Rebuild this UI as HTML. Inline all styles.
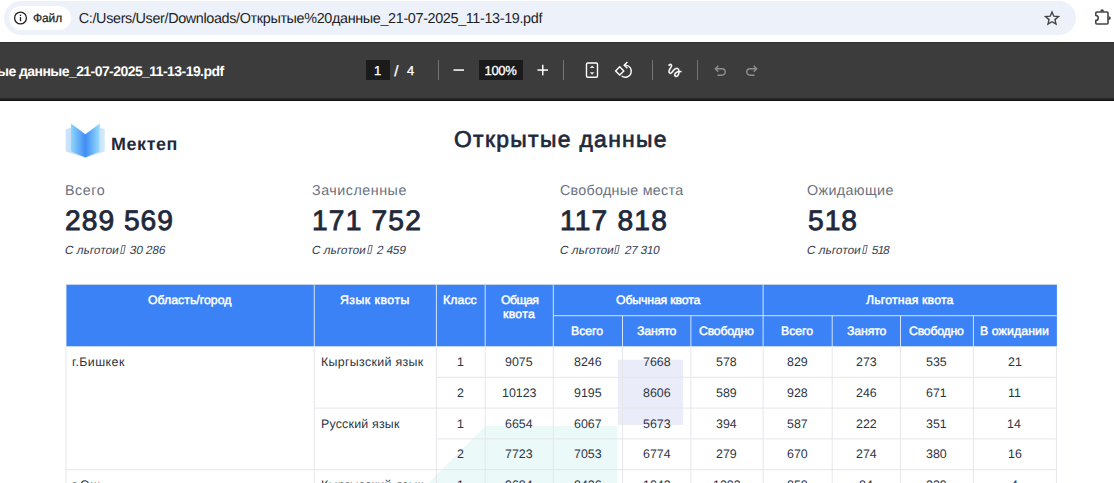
<!DOCTYPE html>
<html lang="ru">
<head>
<meta charset="utf-8">
<title>Открытые данные</title>
<style>
html,body{margin:0;padding:0;}
body{width:1114px;height:483px;overflow:hidden;background:#fff;font-family:"Liberation Sans",sans-serif;position:relative;text-rendering:geometricPrecision;}
.a{position:absolute;}
.t{position:absolute;white-space:nowrap;}
</style>
</head>
<body>
<!-- browser address bar -->
<div class="a" style="left:4px;top:1px;width:1072px;height:34px;border-radius:17px;background:#edf1fa"></div>
<div class="a" style="left:9px;top:6px;width:62px;height:24px;border-radius:12px;background:#fff"></div>
<!-- pdf toolbar -->
<div class="a" style="left:0;top:42px;width:1114px;height:56px;background:#3c3c3c"></div>
<div class="a" style="left:0;top:42px;width:1114px;height:1px;background:#303030"></div>
<div class="a" style="left:0;top:98px;width:1114px;height:2px;background:#242424"></div>
<div class="a" style="left:0;top:100px;width:1114px;height:1px;background:#111"></div>
<div class="a" style="left:366px;top:60px;width:24px;height:20px;background:#1b1b1b"></div>
<div class="a" style="left:479px;top:60px;width:44px;height:20px;background:#1b1b1b"></div>
<svg class="a" style="left:0;top:0" width="1114" height="101" viewBox="0 0 1114 101" fill="none">
<!-- info icon -->
<circle cx="20.5" cy="18" r="5.9" stroke="#1f1f1f" stroke-width="1.3"/>
<rect x="19.85" y="17" width="1.3" height="4.2" fill="#1f1f1f"/>
<rect x="19.85" y="14.6" width="1.3" height="1.4" fill="#1f1f1f"/>
<!-- star -->
<path d="M1052.00 11.93 L1053.81 16.21 L1058.46 16.59 L1054.94 19.62 L1055.99 24.09 L1052.00 21.71 L1048.01 24.09 L1049.06 19.62 L1045.54 16.59 L1050.19 16.21 Z" stroke="#444" stroke-width="1.4" stroke-linejoin="miter"/>
<!-- extension puzzle -->
<path d="M1096.8 12 H1107 a1 1 0 0 1 1 1 V23 a1 1 0 0 1 -1 1 H1096.8 a1 1 0 0 1 -1 -1 V20.3 a2.4 2.4 0 0 0 0 -4.8 V13 a1 1 0 0 1 1 -1 Z" stroke="#444" stroke-width="1.6" stroke-linejoin="round"/>
<path d="M1100.2 11.5 a1.9 2.2 0 0 1 3.8 0 Z" fill="#444"/>
<path d="M1108.5 16.2 a2.3 1.9 0 0 1 0 3.8 Z" fill="#444"/>
<!-- separators -->
<rect x="438" y="60" width="1" height="20" fill="#757575"/>
<rect x="563" y="60" width="1" height="20" fill="#757575"/>
<rect x="652" y="60" width="1" height="20" fill="#757575"/>
<rect x="697" y="60" width="1" height="20" fill="#757575"/>
<!-- minus / plus -->
<rect x="453.5" y="69.3" width="10.5" height="1.5" fill="#fff"/>
<rect x="537.5" y="69.3" width="10.5" height="1.5" fill="#fff"/>
<rect x="542" y="64.8" width="1.5" height="10.5" fill="#fff"/>
<!-- fit to page -->
<rect x="586.5" y="63" width="11" height="14.2" rx="1.3" stroke="#fff" stroke-width="1.4"/>
<path d="M589.7 67.9 L592.1 65.4 L594.5 67.9 Z M589.7 72.2 L592.1 74.7 L594.5 72.2 Z" fill="#e8e8e8"/>
<!-- rotate -->
<path d="M619.7 66.8 L623.8 70.9 L619.7 75 L615.6 70.9 Z" stroke="#fff" stroke-width="1.4" stroke-linejoin="miter"/>
<path d="M624.3 65.15 H625.3 A6.05 6.05 0 1 1 621.6 76" stroke="#fff" stroke-width="1.4"/>
<path d="M627.4 62 L624.2 65.15 L627.4 68.3" stroke="#fff" stroke-width="1.4"/>
<!-- draw -->
<g transform="translate(665.6 61.1) scale(0.77)"><path fill="#fff" stroke="#3c3c3c" stroke-width="0.5" d="M4.59 6.89c.7-.71 1.4-1.35 1.71-1.22.5.2 0 1.03-.3 1.52-.25.42-2.86 3.89-2.86 6.31 0 1.28.48 2.34 1.34 2.98.75.56 1.74.73 2.64.46 1.07-.31 1.95-1.4 3.06-2.77 1.21-1.49 2.83-3.44 4.08-3.44 1.63 0 1.65 1.01 1.76 1.79-3.78.64-5.38 3.67-5.38 5.37 0 1.7 1.44 3.09 3.21 3.09 1.63 0 4.29-1.33 4.69-6.1H21v-2.5h-2.47c-.15-1.65-1.09-4.2-4.03-4.2-2.25 0-4.18 1.91-4.94 2.84-.58.73-2.06 2.48-2.29 2.72-.25.3-.68.84-1.11.84-.45 0-.72-.83-.36-1.92.35-1.09 1.4-2.86 1.85-3.52.78-1.14 1.3-1.92 1.3-3.28C8.95 3.69 7.31 3 6.44 3 5.12 3 3.97 4 3.72 4.25c-.36.36-.66.66-.88.93l1.75 1.71zm9.29 11.66c-.31 0-.74-.26-.74-.72 0-.6.73-2.2 2.87-2.76-.3 2.69-1.43 3.48-2.13 3.48z"/></g>
<!-- undo / redo -->
<path d="M718.3 65.8 L715.3 68.8 L718.3 71.8 M715.6 68.8 H722 A3.2 3.2 0 0 1 722 75.2 H717.5" stroke="#8f8f8f" stroke-width="1.4"/>
<path d="M753.7 65.8 L756.7 68.8 L753.7 71.8 M756.4 68.8 H750 A3.2 3.2 0 0 0 750 75.2 H754.5" stroke="#8f8f8f" stroke-width="1.4"/>
</svg>
<!-- logo -->
<svg class="a" style="left:64px;top:120px" width="44" height="40" viewBox="64 120 44 40">
<defs>
<linearGradient id="g1" x1="0" y1="0" x2="1" y2="0"><stop offset="0" stop-color="#8fd6fb"/><stop offset="0.5" stop-color="#3f8df6"/><stop offset="1" stop-color="#9addfc"/></linearGradient>
<linearGradient id="g2" x1="0" y1="0" x2="1" y2="0"><stop offset="0" stop-color="#cfe6fb"/><stop offset="0.5" stop-color="#a9c8f5"/><stop offset="1" stop-color="#d3ecfc"/></linearGradient>
</defs>
<polygon points="65.7,129 71,128 71,151.4 85.3,157.5 99.8,151.4 99.8,128 104.8,129 104.8,151.4 85.3,157.5 65.7,151.4" fill="url(#g2)"/>
<polygon points="71,123.4 85.3,134.2 99.8,123.4 99.8,151.4 85.3,157.5 71,151.4" fill="url(#g1)"/>
</svg>

<!-- page -->
<svg class="a" style="left:0;top:0" width="1114" height="483" viewBox="0 0 1114 483" shape-rendering="auto">
<polygon points="485.5,426 617.5,426 617.5,483 428.5,483" fill="#ebf9f9"/>
<rect x="617.9" y="359.8" width="65.2" height="65.1" fill="#ebecf9"/>
<rect x="65.5" y="284" width="991.4" height="1" fill="#e5e7eb"/>
<rect x="66.4" y="284.8" width="990.5" height="61.5" fill="#3b82f6"/>
<rect x="313.80" y="285" width="1" height="61.30" fill="rgba(255,255,255,0.78)"/>
<rect x="435.90" y="285" width="1" height="61.30" fill="rgba(255,255,255,0.78)"/>
<rect x="484.70" y="285" width="1" height="61.30" fill="rgba(255,255,255,0.78)"/>
<rect x="552.80" y="285" width="1" height="61.30" fill="rgba(255,255,255,0.78)"/>
<rect x="622.00" y="315.7" width="1" height="30.60" fill="rgba(255,255,255,0.78)"/>
<rect x="690.40" y="315.7" width="1" height="30.60" fill="rgba(255,255,255,0.78)"/>
<rect x="762.60" y="285" width="1" height="61.30" fill="rgba(255,255,255,0.78)"/>
<rect x="831.70" y="315.7" width="1" height="30.60" fill="rgba(255,255,255,0.78)"/>
<rect x="900.00" y="315.7" width="1" height="30.60" fill="rgba(255,255,255,0.78)"/>
<rect x="972.90" y="315.7" width="1" height="30.60" fill="rgba(255,255,255,0.78)"/>
<rect x="553.3" y="315.20" width="503.60" height="1" fill="rgba(255,255,255,0.78)"/>
<rect x="65.50" y="346.3" width="1" height="136.70" fill="#e5e7eb"/>
<rect x="313.80" y="346.3" width="1" height="136.70" fill="#e5e7eb"/>
<rect x="435.90" y="346.3" width="1" height="136.70" fill="#e5e7eb"/>
<rect x="484.70" y="346.3" width="1" height="136.70" fill="#e5e7eb"/>
<rect x="552.80" y="346.3" width="1" height="136.70" fill="#e5e7eb"/>
<rect x="622.00" y="346.3" width="1" height="136.70" fill="#e5e7eb"/>
<rect x="690.40" y="346.3" width="1" height="136.70" fill="#e5e7eb"/>
<rect x="762.60" y="346.3" width="1" height="136.70" fill="#e5e7eb"/>
<rect x="831.70" y="346.3" width="1" height="136.70" fill="#e5e7eb"/>
<rect x="900.00" y="346.3" width="1" height="136.70" fill="#e5e7eb"/>
<rect x="972.90" y="346.3" width="1" height="136.70" fill="#e5e7eb"/>
<rect x="1055.90" y="346.3" width="1" height="136.70" fill="#e5e7eb"/>
<rect x="436.4" y="376.80" width="620.50" height="1" fill="#e5e7eb"/>
<rect x="314.3" y="407.60" width="742.60" height="1" fill="#e5e7eb"/>
<rect x="436.4" y="438.40" width="620.50" height="1" fill="#e5e7eb"/>
<rect x="65.5" y="469.20" width="991.40" height="1" fill="#e5e7eb"/>
</svg>
<div class="t" style="left:32.90px;top:12.30px;line-height:12px;font-size:12px;color:#1f1f1f;letter-spacing:-0.067px;-webkit-text-stroke:0.25px #1f1f1f;">Файл</div>
<div class="t" style="left:78.80px;top:12.00px;line-height:14.4px;font-size:14.4px;color:#1f1f1f;letter-spacing:-0.358px;">C:/Users/User/Downloads/Открытые%20данные_21-07-2025_11-13-19.pdf</div>
<div class="t" style="left:-3.00px;top:63.80px;line-height:14px;font-size:14px;color:#ffffff;font-weight:700;letter-spacing:-0.562px;">ые данные_21-07-2025_11-13-19.pdf</div>
<div class="t" style="left:374.00px;top:64.00px;line-height:13px;font-size:13px;color:#ffffff;-webkit-text-stroke:0.3px #ffffff;">1</div>
<div class="t" style="left:394.30px;top:63.60px;line-height:15px;font-size:15px;color:#ffffff;-webkit-text-stroke:0.3px #ffffff;">/</div>
<div class="t" style="left:407.00px;top:64.00px;line-height:13px;font-size:13px;color:#ffffff;-webkit-text-stroke:0.3px #ffffff;">4</div>
<div class="t" style="left:484.50px;top:64.00px;line-height:13px;font-size:13px;color:#ffffff;letter-spacing:-0.333px;-webkit-text-stroke:0.3px #ffffff;">100%</div>
<div class="t" style="left:110.50px;top:135.70px;line-height:17.9px;font-size:17.9px;color:#1e293b;font-weight:700;transform:skewX(-0.02deg);letter-spacing:0.620px;">Мектеп</div>
<div class="t" style="left:454.40px;top:128.20px;line-height:22.9px;font-size:22.9px;color:#1e293b;transform:skewX(-0.02deg);letter-spacing:1.321px;-webkit-text-stroke:0.7px #1e293b;">Открытые данные</div>
<div class="t" style="left:65.30px;top:183.80px;line-height:14.3px;font-size:14.3px;color:#6b7280;transform:skewX(-0.02deg);letter-spacing:0.525px;">Всего</div>
<div class="t" style="left:312.10px;top:183.80px;line-height:14.3px;font-size:14.3px;color:#6b7280;transform:skewX(-0.02deg);letter-spacing:0.520px;">Зачисленные</div>
<div class="t" style="left:559.60px;top:183.80px;line-height:14.3px;font-size:14.3px;color:#6b7280;transform:skewX(-0.02deg);letter-spacing:0.279px;">Свободные места</div>
<div class="t" style="left:807.10px;top:183.80px;line-height:14.3px;font-size:14.3px;color:#6b7280;transform:skewX(-0.02deg);letter-spacing:0.375px;">Ожидающие</div>
<div class="t" style="left:65.30px;top:206.40px;line-height:28.2px;font-size:28.2px;color:#1e293b;transform:skewX(-0.02deg);letter-spacing:1.017px;-webkit-text-stroke:0.85px #1e293b;">289 569</div>
<div class="t" style="left:311.50px;top:206.40px;line-height:28.2px;font-size:28.2px;color:#1e293b;transform:skewX(-0.02deg);letter-spacing:1.167px;-webkit-text-stroke:0.85px #1e293b;">171 752</div>
<div class="t" style="left:559.60px;top:206.40px;line-height:28.2px;font-size:28.2px;color:#1e293b;transform:skewX(-0.02deg);letter-spacing:1.183px;-webkit-text-stroke:0.85px #1e293b;">117 818</div>
<div class="t" style="left:807.50px;top:206.40px;line-height:28.2px;font-size:28.2px;color:#1e293b;transform:skewX(-0.02deg);letter-spacing:1.000px;-webkit-text-stroke:0.85px #1e293b;">518</div>
<div class="t" style="left:64.00px;top:244.70px;line-height:11.8px;font-size:11.8px;color:#374151;transform:skewX(-11deg);transform-origin:0 85%;letter-spacing:0.050px;">С льготои</div>
<div class="t" style="left:129.40px;top:244.70px;line-height:11.8px;font-size:11.8px;color:#374151;transform:skewX(-11deg);transform-origin:0 85%;letter-spacing:-0.080px;">30 286</div>
<div class="t" style="left:311.00px;top:244.70px;line-height:11.8px;font-size:11.8px;color:#374151;transform:skewX(-11deg);transform-origin:0 85%;letter-spacing:0.050px;">С льготои</div>
<div class="t" style="left:376.40px;top:244.70px;line-height:11.8px;font-size:11.8px;color:#374151;transform:skewX(-11deg);transform-origin:0 85%;letter-spacing:-0.075px;">2 459</div>
<div class="t" style="left:558.60px;top:244.70px;line-height:11.8px;font-size:11.8px;color:#374151;transform:skewX(-11deg);transform-origin:0 85%;letter-spacing:0.050px;">С льготои</div>
<div class="t" style="left:624.00px;top:244.70px;line-height:11.8px;font-size:11.8px;color:#374151;transform:skewX(-11deg);transform-origin:0 85%;letter-spacing:-0.240px;">27 310</div>
<div class="t" style="left:806.00px;top:244.70px;line-height:11.8px;font-size:11.8px;color:#374151;transform:skewX(-11deg);transform-origin:0 85%;letter-spacing:0.050px;">С льготои</div>
<div class="t" style="left:871.40px;top:244.70px;line-height:11.8px;font-size:11.8px;color:#374151;transform:skewX(-11deg);transform-origin:0 85%;letter-spacing:-0.850px;">518</div>
<div class="t" style="left:148.15px;top:294.30px;line-height:12.3px;font-size:12.3px;color:#ffffff;transform:skewX(-0.02deg);letter-spacing:0.008px;-webkit-text-stroke:0.45px #ffffff;">Область/город</div>
<div class="t" style="left:340.35px;top:294.30px;line-height:12.3px;font-size:12.3px;color:#ffffff;transform:skewX(-0.02deg);letter-spacing:0.489px;-webkit-text-stroke:0.45px #ffffff;">Язык квоты</div>
<div class="t" style="left:443.30px;top:294.30px;line-height:12.3px;font-size:12.3px;color:#ffffff;transform:skewX(-0.02deg);letter-spacing:0.075px;-webkit-text-stroke:0.45px #ffffff;">Класс</div>
<div class="t" style="left:500.75px;top:294.30px;line-height:12.3px;font-size:12.3px;color:#ffffff;transform:skewX(-0.02deg);letter-spacing:-0.550px;-webkit-text-stroke:0.45px #ffffff;">Общая</div>
<div class="t" style="left:502.75px;top:308.30px;line-height:12.3px;font-size:12.3px;color:#ffffff;transform:skewX(-0.02deg);letter-spacing:0.300px;-webkit-text-stroke:0.45px #ffffff;">квота</div>
<div class="t" style="left:615.70px;top:294.30px;line-height:12.3px;font-size:12.3px;color:#ffffff;transform:skewX(-0.02deg);letter-spacing:-0.150px;-webkit-text-stroke:0.45px #ffffff;">Обычная квота</div>
<div class="t" style="left:865.80px;top:294.30px;line-height:12.3px;font-size:12.3px;color:#ffffff;transform:skewX(-0.02deg);letter-spacing:0.162px;-webkit-text-stroke:0.45px #ffffff;">Льготная квота</div>
<div class="t" style="left:571.35px;top:325.30px;line-height:12.3px;font-size:12.3px;color:#ffffff;transform:skewX(-0.02deg);letter-spacing:-0.050px;-webkit-text-stroke:0.45px #ffffff;">Всего</div>
<div class="t" style="left:637.10px;top:325.30px;line-height:12.3px;font-size:12.3px;color:#ffffff;transform:skewX(-0.02deg);letter-spacing:-0.140px;-webkit-text-stroke:0.45px #ffffff;">Занято</div>
<div class="t" style="left:699.45px;top:325.30px;line-height:12.3px;font-size:12.3px;color:#ffffff;transform:skewX(-0.02deg);letter-spacing:-0.229px;-webkit-text-stroke:0.45px #ffffff;">Свободно</div>
<div class="t" style="left:781.15px;top:325.30px;line-height:12.3px;font-size:12.3px;color:#ffffff;transform:skewX(-0.02deg);letter-spacing:-0.050px;-webkit-text-stroke:0.45px #ffffff;">Всего</div>
<div class="t" style="left:846.85px;top:325.30px;line-height:12.3px;font-size:12.3px;color:#ffffff;transform:skewX(-0.02deg);letter-spacing:-0.140px;-webkit-text-stroke:0.45px #ffffff;">Занято</div>
<div class="t" style="left:909.45px;top:325.30px;line-height:12.3px;font-size:12.3px;color:#ffffff;transform:skewX(-0.02deg);letter-spacing:-0.229px;-webkit-text-stroke:0.45px #ffffff;">Свободно</div>
<div class="t" style="left:980.45px;top:325.30px;line-height:12.3px;font-size:12.3px;color:#ffffff;transform:skewX(-0.02deg);letter-spacing:0.100px;-webkit-text-stroke:0.45px #ffffff;">В ожидании</div>
<div class="t" style="left:457.30px;top:356.00px;line-height:12.4px;font-size:12.4px;color:#2b3545;transform:skewX(-0.02deg);">1</div>
<div class="t" style="left:505.25px;top:356.00px;line-height:12.4px;font-size:12.4px;color:#2b3545;transform:skewX(-0.02deg);">9075</div>
<div class="t" style="left:573.85px;top:356.00px;line-height:12.4px;font-size:12.4px;color:#2b3545;transform:skewX(-0.02deg);">8246</div>
<div class="t" style="left:642.60px;top:356.00px;line-height:12.4px;font-size:12.4px;color:#2b3545;transform:skewX(-0.02deg);">7668</div>
<div class="t" style="left:716.45px;top:356.00px;line-height:12.4px;font-size:12.4px;color:#2b3545;transform:skewX(-0.02deg);">578</div>
<div class="t" style="left:787.15px;top:356.00px;line-height:12.4px;font-size:12.4px;color:#2b3545;transform:skewX(-0.02deg);">829</div>
<div class="t" style="left:855.85px;top:356.00px;line-height:12.4px;font-size:12.4px;color:#2b3545;transform:skewX(-0.02deg);">273</div>
<div class="t" style="left:926.45px;top:356.00px;line-height:12.4px;font-size:12.4px;color:#2b3545;transform:skewX(-0.02deg);">535</div>
<div class="t" style="left:1007.95px;top:356.00px;line-height:12.4px;font-size:12.4px;color:#2b3545;transform:skewX(-0.02deg);">21</div>
<div class="t" style="left:457.30px;top:387.20px;line-height:12.4px;font-size:12.4px;color:#2b3545;transform:skewX(-0.02deg);">2</div>
<div class="t" style="left:501.75px;top:387.20px;line-height:12.4px;font-size:12.4px;color:#2b3545;transform:skewX(-0.02deg);">10123</div>
<div class="t" style="left:573.85px;top:387.20px;line-height:12.4px;font-size:12.4px;color:#2b3545;transform:skewX(-0.02deg);">9195</div>
<div class="t" style="left:642.60px;top:387.20px;line-height:12.4px;font-size:12.4px;color:#2b3545;transform:skewX(-0.02deg);">8606</div>
<div class="t" style="left:716.45px;top:387.20px;line-height:12.4px;font-size:12.4px;color:#2b3545;transform:skewX(-0.02deg);">589</div>
<div class="t" style="left:787.15px;top:387.20px;line-height:12.4px;font-size:12.4px;color:#2b3545;transform:skewX(-0.02deg);">928</div>
<div class="t" style="left:855.85px;top:387.20px;line-height:12.4px;font-size:12.4px;color:#2b3545;transform:skewX(-0.02deg);">246</div>
<div class="t" style="left:926.45px;top:387.20px;line-height:12.4px;font-size:12.4px;color:#2b3545;transform:skewX(-0.02deg);">671</div>
<div class="t" style="left:1008.45px;top:387.20px;line-height:12.4px;font-size:12.4px;color:#2b3545;transform:skewX(-0.02deg);">11</div>
<div class="t" style="left:457.30px;top:418.20px;line-height:12.4px;font-size:12.4px;color:#2b3545;transform:skewX(-0.02deg);">1</div>
<div class="t" style="left:505.25px;top:418.20px;line-height:12.4px;font-size:12.4px;color:#2b3545;transform:skewX(-0.02deg);">6654</div>
<div class="t" style="left:573.85px;top:418.20px;line-height:12.4px;font-size:12.4px;color:#2b3545;transform:skewX(-0.02deg);">6067</div>
<div class="t" style="left:642.60px;top:418.20px;line-height:12.4px;font-size:12.4px;color:#2b3545;transform:skewX(-0.02deg);">5673</div>
<div class="t" style="left:716.45px;top:418.20px;line-height:12.4px;font-size:12.4px;color:#2b3545;transform:skewX(-0.02deg);">394</div>
<div class="t" style="left:787.15px;top:418.20px;line-height:12.4px;font-size:12.4px;color:#2b3545;transform:skewX(-0.02deg);">587</div>
<div class="t" style="left:855.85px;top:418.20px;line-height:12.4px;font-size:12.4px;color:#2b3545;transform:skewX(-0.02deg);">222</div>
<div class="t" style="left:926.45px;top:418.20px;line-height:12.4px;font-size:12.4px;color:#2b3545;transform:skewX(-0.02deg);">351</div>
<div class="t" style="left:1007.45px;top:418.20px;line-height:12.4px;font-size:12.4px;color:#2b3545;transform:skewX(-0.02deg);">14</div>
<div class="t" style="left:457.30px;top:447.80px;line-height:12.4px;font-size:12.4px;color:#2b3545;transform:skewX(-0.02deg);">2</div>
<div class="t" style="left:505.25px;top:447.80px;line-height:12.4px;font-size:12.4px;color:#2b3545;transform:skewX(-0.02deg);">7723</div>
<div class="t" style="left:573.85px;top:447.80px;line-height:12.4px;font-size:12.4px;color:#2b3545;transform:skewX(-0.02deg);">7053</div>
<div class="t" style="left:642.60px;top:447.80px;line-height:12.4px;font-size:12.4px;color:#2b3545;transform:skewX(-0.02deg);">6774</div>
<div class="t" style="left:716.45px;top:447.80px;line-height:12.4px;font-size:12.4px;color:#2b3545;transform:skewX(-0.02deg);">279</div>
<div class="t" style="left:787.15px;top:447.80px;line-height:12.4px;font-size:12.4px;color:#2b3545;transform:skewX(-0.02deg);">670</div>
<div class="t" style="left:855.85px;top:447.80px;line-height:12.4px;font-size:12.4px;color:#2b3545;transform:skewX(-0.02deg);">274</div>
<div class="t" style="left:926.45px;top:447.80px;line-height:12.4px;font-size:12.4px;color:#2b3545;transform:skewX(-0.02deg);">380</div>
<div class="t" style="left:1007.95px;top:447.80px;line-height:12.4px;font-size:12.4px;color:#2b3545;transform:skewX(-0.02deg);">16</div>
<div class="t" style="left:457.30px;top:478.60px;line-height:12.4px;font-size:12.4px;color:#2b3545;transform:skewX(-0.02deg);">1</div>
<div class="t" style="left:505.25px;top:478.60px;line-height:12.4px;font-size:12.4px;color:#2b3545;transform:skewX(-0.02deg);">9684</div>
<div class="t" style="left:573.85px;top:478.60px;line-height:12.4px;font-size:12.4px;color:#2b3545;transform:skewX(-0.02deg);">8426</div>
<div class="t" style="left:642.60px;top:478.60px;line-height:12.4px;font-size:12.4px;color:#2b3545;transform:skewX(-0.02deg);">1043</div>
<div class="t" style="left:712.95px;top:478.60px;line-height:12.4px;font-size:12.4px;color:#2b3545;transform:skewX(-0.02deg);">1383</div>
<div class="t" style="left:787.15px;top:478.60px;line-height:12.4px;font-size:12.4px;color:#2b3545;transform:skewX(-0.02deg);">858</div>
<div class="t" style="left:858.85px;top:478.60px;line-height:12.4px;font-size:12.4px;color:#2b3545;transform:skewX(-0.02deg);">84</div>
<div class="t" style="left:926.45px;top:478.60px;line-height:12.4px;font-size:12.4px;color:#2b3545;transform:skewX(-0.02deg);">239</div>
<div class="t" style="left:1011.45px;top:478.60px;line-height:12.4px;font-size:12.4px;color:#2b3545;transform:skewX(-0.02deg);">4</div>
<div class="t" style="left:71.80px;top:356.00px;line-height:12.4px;font-size:12.4px;color:#2b3545;transform:skewX(-0.02deg);letter-spacing:0.429px;">г.Бишкек</div>
<div class="t" style="left:320.90px;top:356.00px;line-height:12.4px;font-size:12.4px;color:#2b3545;transform:skewX(-0.02deg);letter-spacing:0.329px;">Кыргызский язык</div>
<div class="t" style="left:320.50px;top:418.20px;line-height:12.4px;font-size:12.4px;color:#2b3545;transform:skewX(-0.02deg);letter-spacing:0.200px;">Русский язык</div>
<div class="t" style="left:71.80px;top:478.60px;line-height:12.4px;font-size:12.4px;color:#2b3545;transform:skewX(-0.02deg);letter-spacing:0.733px;">г.Ош</div>
<div class="t" style="left:320.90px;top:478.60px;line-height:12.4px;font-size:12.4px;color:#2b3545;transform:skewX(-0.02deg);letter-spacing:0.329px;">Кыргызский язык</div>
<div class="a" style="left:120.6px;top:245.2px;width:2.2px;height:6.6px;border:0.6px solid #6b7280;transform:skewX(-11deg)"></div>
<div class="a" style="left:367.6px;top:245.2px;width:2.2px;height:6.6px;border:0.6px solid #6b7280;transform:skewX(-11deg)"></div>
<div class="a" style="left:615.2px;top:245.2px;width:2.2px;height:6.6px;border:0.6px solid #6b7280;transform:skewX(-11deg)"></div>
<div class="a" style="left:862.6px;top:245.2px;width:2.2px;height:6.6px;border:0.6px solid #6b7280;transform:skewX(-11deg)"></div>
</body>
</html>
